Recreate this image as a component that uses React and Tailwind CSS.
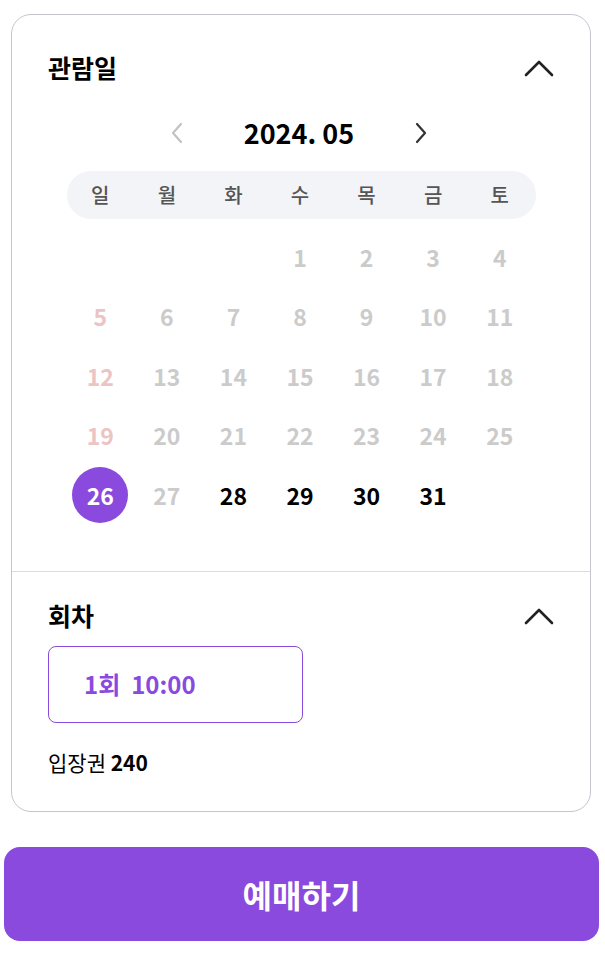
const PURPLE = '#8a4ade';

const ChevronUp = () => (
  <svg width="30" height="18" viewBox="0 0 30 18" fill="none">
    <polyline points="2,16 15,3 28,16" stroke="#222" strokeWidth="2.6" strokeLinecap="round" strokeLinejoin="round" />
  </svg>
);

const weekdays = ['일', '월', '화', '수', '목', '금', '토'];

// May 2024 starts on Wednesday
const cells = [null, null, null, ...Array.from({ length: 31 }, (_, i) => i + 1)];

const dayClass = (d, col) => {
  if (d === 26) return 'text-white';
  if (d >= 28) return 'text-black';
  if (col === 0) return 'text-[#ecc4c4]';
  return 'text-[#cbcbcb]';
};

export default function App() {
  return (
    <div
      className="w-[605px] min-h-[958px] bg-white pl-[4px] pt-[14px]"
      style={{ fontFamily: '"Noto Sans CJK KR", "Noto Sans", sans-serif' }}
    >
      {/* Card */}
      <div className="ml-[7px] w-[580px] rounded-[20px] border border-[#c3c6cf] bg-white">
        {/* 관람일 */}
        <div className="px-[36px] pt-[35px] pb-[46px]">
          <div className="flex h-[36px] items-center justify-between">
            <h2 className="text-[25px] font-bold text-black">관람일</h2>
            <ChevronUp />
          </div>

          <div className="mt-[27px] flex h-[40px] items-center justify-center pr-[4px]">
            <svg width="14" height="22" viewBox="0 0 14 22" fill="none" className="mr-[60px]">
              <polyline points="11,2 3,11 11,20" stroke="#c2c2c2" strokeWidth="2.2" strokeLinecap="round" strokeLinejoin="round" />
            </svg>
            <span className="text-[27px] font-semibold text-black">2024. 05</span>
            <svg width="14" height="22" viewBox="0 0 14 22" fill="none" className="ml-[60px]">
              <polyline points="3,2 11,11 3,20" stroke="#333" strokeWidth="2.2" strokeLinecap="round" strokeLinejoin="round" />
            </svg>
          </div>

          <div className="ml-[19px] mt-[18px] flex h-[48px] w-[469px] items-center rounded-full bg-[#f3f4f8]">
            <div className="grid w-[466px] grid-cols-7">
              {weekdays.map((w) => (
                <span key={w} className="text-center text-[20px] font-medium text-[#555]">
                  {w}
                </span>
              ))}
            </div>
          </div>

          <div className="ml-[19px] mt-[8px] grid w-[466px] grid-cols-7 auto-rows-[59.5px]">
            {cells.map((d, i) => (
              <div key={i} className="flex items-center justify-center">
                {d && (
                  <span
                    className={`flex h-[56px] w-[56px] items-center justify-center rounded-full text-[23px] font-semibold ${
                      d === 26 ? 'bg-[#8a4ade]' : ''
                    } ${dayClass(d, i % 7)}`}
                  >
                    {d}
                  </span>
                )}
              </div>
            ))}
          </div>
        </div>

        <div className="h-px bg-[#dcdcdf]" />

        {/* 회차 */}
        <div className="px-[36px] pt-[26px] pb-[37px]">
          <div className="flex h-[36px] items-center justify-between">
            <h2 className="text-[25px] font-bold text-black">회차</h2>
            <ChevronUp />
          </div>

          <button
            className="mt-[12px] flex h-[77px] w-[255px] items-center rounded-[8px] border bg-white pl-[35px]"
            style={{ borderColor: PURPLE }}
          >
            <span className="text-[24px] font-bold text-[#8a4ade] whitespace-pre">1회  10:00</span>
          </button>

          <p className="mt-[27px] h-[24px] text-[21px] leading-[24px] text-black">
            입장권 <span className="font-bold">240</span>
          </p>
        </div>
      </div>

      {/* 예매하기 */}
      <button className="mt-[35px] flex h-[94px] w-[595px] items-center justify-center rounded-[16px] bg-[#8a4ade]">
        <span className="text-[32px] font-bold text-white">예매하기</span>
      </button>
    </div>
  );
}
